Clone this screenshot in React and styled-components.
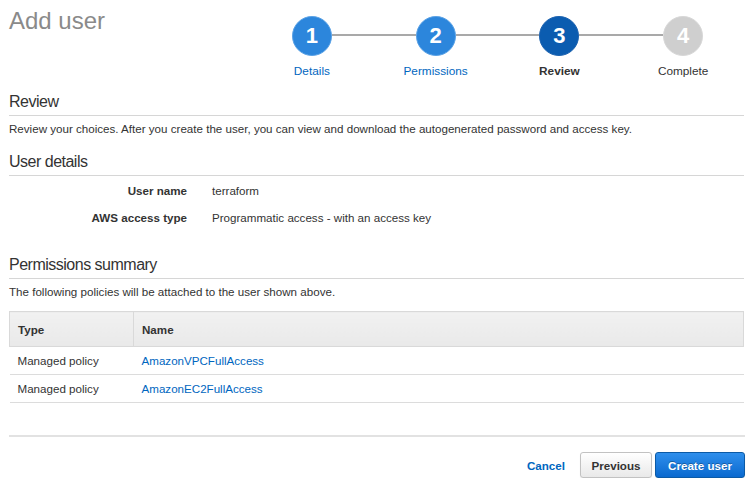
import React from 'react';
import styled, { createGlobalStyle } from 'styled-components';

const GlobalStyle = createGlobalStyle`
  html, body {
    margin: 0;
    padding: 0;
    background: #fff;
  }
  body {
    font-family: "Liberation Sans", Arial, Helvetica, sans-serif;
    color: #333;
  }
`;

const steps = [
  { n: 1, label: 'Details', state: 'done' },
  { n: 2, label: 'Permissions', state: 'done' },
  { n: 3, label: 'Review', state: 'active' },
  { n: 4, label: 'Complete', state: 'todo' },
];

const policies = ['AmazonVPCFullAccess', 'AmazonEC2FullAccess'];

const App = () => {
  return (
    <>
      <GlobalStyle />
      <Page>
        <Header>
          <Title>Add user</Title>
          <Stepper>
            {steps.map((s, i) => (
              <Step key={s.n}>
                <Track>
                  <Connector $hidden={i === 0} />
                  <Circle $state={s.state}>{s.n}</Circle>
                  <Connector $hidden={i === steps.length - 1} />
                </Track>
                <StepLabel $state={s.state}>{s.label}</StepLabel>
              </Step>
            ))}
          </Stepper>
        </Header>

        <SectionTitle>Review</SectionTitle>
        <Text>
          Review your choices. After you create the user, you can view and download the autogenerated password and access key.
        </Text>

        <SectionTitle $gap={16}>User details</SectionTitle>
        <Details>
          <DetailLabel>User name</DetailLabel>
          <DetailValue>terraform</DetailValue>
          <DetailLabel>AWS access type</DetailLabel>
          <DetailValue>Programmatic access - with an access key</DetailValue>
        </Details>

        <SectionTitle $gap={30}>Permissions summary</SectionTitle>
        <Text>The following policies will be attached to the user shown above.</Text>

        <Table>
          <thead>
            <tr>
              <Th $first>Type</Th>
              <Th>Name</Th>
            </tr>
          </thead>
          <tbody>
            {policies.map((p) => (
              <tr key={p}>
                <Td $first>Managed policy</Td>
                <Td>
                  <Link href="#">{p}</Link>
                </Td>
              </tr>
            ))}
          </tbody>
        </Table>

        <Footer>
          <CancelLink href="#">Cancel</CancelLink>
          <Button>Previous</Button>
          <Button $primary>Create user</Button>
        </Footer>
      </Page>
    </>
  );
};

const Page = styled.div`
  padding: 0 6px 0 9px;
  width: 750px;
  box-sizing: border-box;
`;

const Header = styled.div`
  display: flex;
  justify-content: space-between;
  align-items: flex-start;
  height: 93px;
`;

const Title = styled.h1`
  margin: 6px 0 0;
  font-size: 24px;
  line-height: 29px;
  font-weight: normal;
  color: #8a8a8a;
`;

const Stepper = styled.div`
  display: flex;
  width: 495px;
  margin-right: -1px;
  padding-top: 16px;
`;

const Step = styled.div`
  flex: 1;
  display: flex;
  flex-direction: column;
  align-items: center;
`;

const Track = styled.div`
  display: flex;
  align-items: center;
  width: 100%;
`;

const Connector = styled.div`
  flex: 1;
  height: 2px;
  margin-top: -3px;
  background: ${(p) => (p.$hidden ? 'transparent' : '#a9a9a9')};
`;

const circleColors = {
  done: '#2c86dc',
  active: '#0b5cb0',
  todo: '#cfcfcf',
};

const Circle = styled.div`
  width: 38px;
  height: 38px;
  border-radius: 50%;
  border: 1px solid ${(p) => (p.$state === 'todo' ? '#d8d8d8' : p.$state === 'active' ? '#1d63b0' : '#5aa2e6')};
  background: ${(p) => circleColors[p.$state]};
  color: #fff;
  font-size: 22px;
  font-weight: bold;
  display: flex;
  align-items: center;
  justify-content: center;
`;

const StepLabel = styled.div`
  margin-top: 7px;
  font-size: 11.8px;
  line-height: 16px;
  white-space: nowrap;
  color: ${(p) => (p.$state === 'done' ? '#0066c0' : '#333')};
  font-weight: ${(p) => (p.$state === 'active' ? 'bold' : 'normal')};
`;

const SectionTitle = styled.h2`
  margin: ${(p) => p.$gap || 0}px 0 0;
  padding-bottom: 4px;
  font-size: 16px;
  line-height: 18px;
  letter-spacing: -0.5px;
  font-weight: normal;
  color: #333;
  border-bottom: 1px solid #d6d6d6;
`;

const Text = styled.p`
  margin: 5px 0 0;
  font-size: 11.6px;
  line-height: 16px;
  color: #333;
`;

const Details = styled.div`
  display: grid;
  grid-template-columns: 178px 1fr;
  column-gap: 25px;
  row-gap: 11px;
  margin-top: 7px;
  font-size: 11.6px;
  line-height: 16px;
`;

const DetailLabel = styled.div`
  text-align: right;
  font-weight: bold;
  color: #333;
`;

const DetailValue = styled.div`
  color: #333;
`;

const Table = styled.table`
  width: 100%;
  margin-top: 11px;
  border-collapse: collapse;
  font-size: 11.6px;
`;

const Th = styled.th`
  height: 34px;
  padding: 0 8px;
  text-align: left;
  font-weight: bold;
  color: #333;
  background: linear-gradient(#f1f1f1, #e9e9e9);
  border: 1px solid #d9d9d9;
  width: ${(p) => (p.$first ? '107px' : 'auto')};
`;

const Td = styled.td`
  height: 27px;
  padding: 0 8px;
  color: #333;
  border-bottom: 1px solid #dcdcdc;
`;

const Link = styled.a`
  color: #0066c0;
  text-decoration: none;
`;

const Footer = styled.div`
  display: flex;
  justify-content: flex-end;
  align-items: center;
  gap: 3px;
  margin: 32px -1px 0 0;
  padding-top: 15px;
  border-top: 2px solid #e2e2e2;
`;

const CancelLink = styled.a`
  margin-right: 12px;
  font-size: 11.6px;
  font-weight: bold;
  color: #0066c0;
  text-decoration: none;
`;

const Button = styled.button`
  height: 26px;
  width: ${(p) => (p.$primary ? '90px' : '72px')};
  padding: 0;
  font-family: inherit;
  font-size: 11.6px;
  font-weight: bold;
  border-radius: 3px;
  cursor: pointer;
  color: ${(p) => (p.$primary ? '#fff' : '#333')};
  text-shadow: ${(p) => (p.$primary ? '0 -1px 0 rgba(0,0,0,0.3)' : 'none')};
  border: 1px solid ${(p) => (p.$primary ? '#0b5aa6' : '#c2c2c2')};
  background: ${(p) =>
    p.$primary ? 'linear-gradient(#2f8fec, #0a69cf)' : 'linear-gradient(#ffffff, #e9e9e9)'};
  box-shadow: 0 1px 1px rgba(0, 0, 0, 0.08);
`;

export default App;
